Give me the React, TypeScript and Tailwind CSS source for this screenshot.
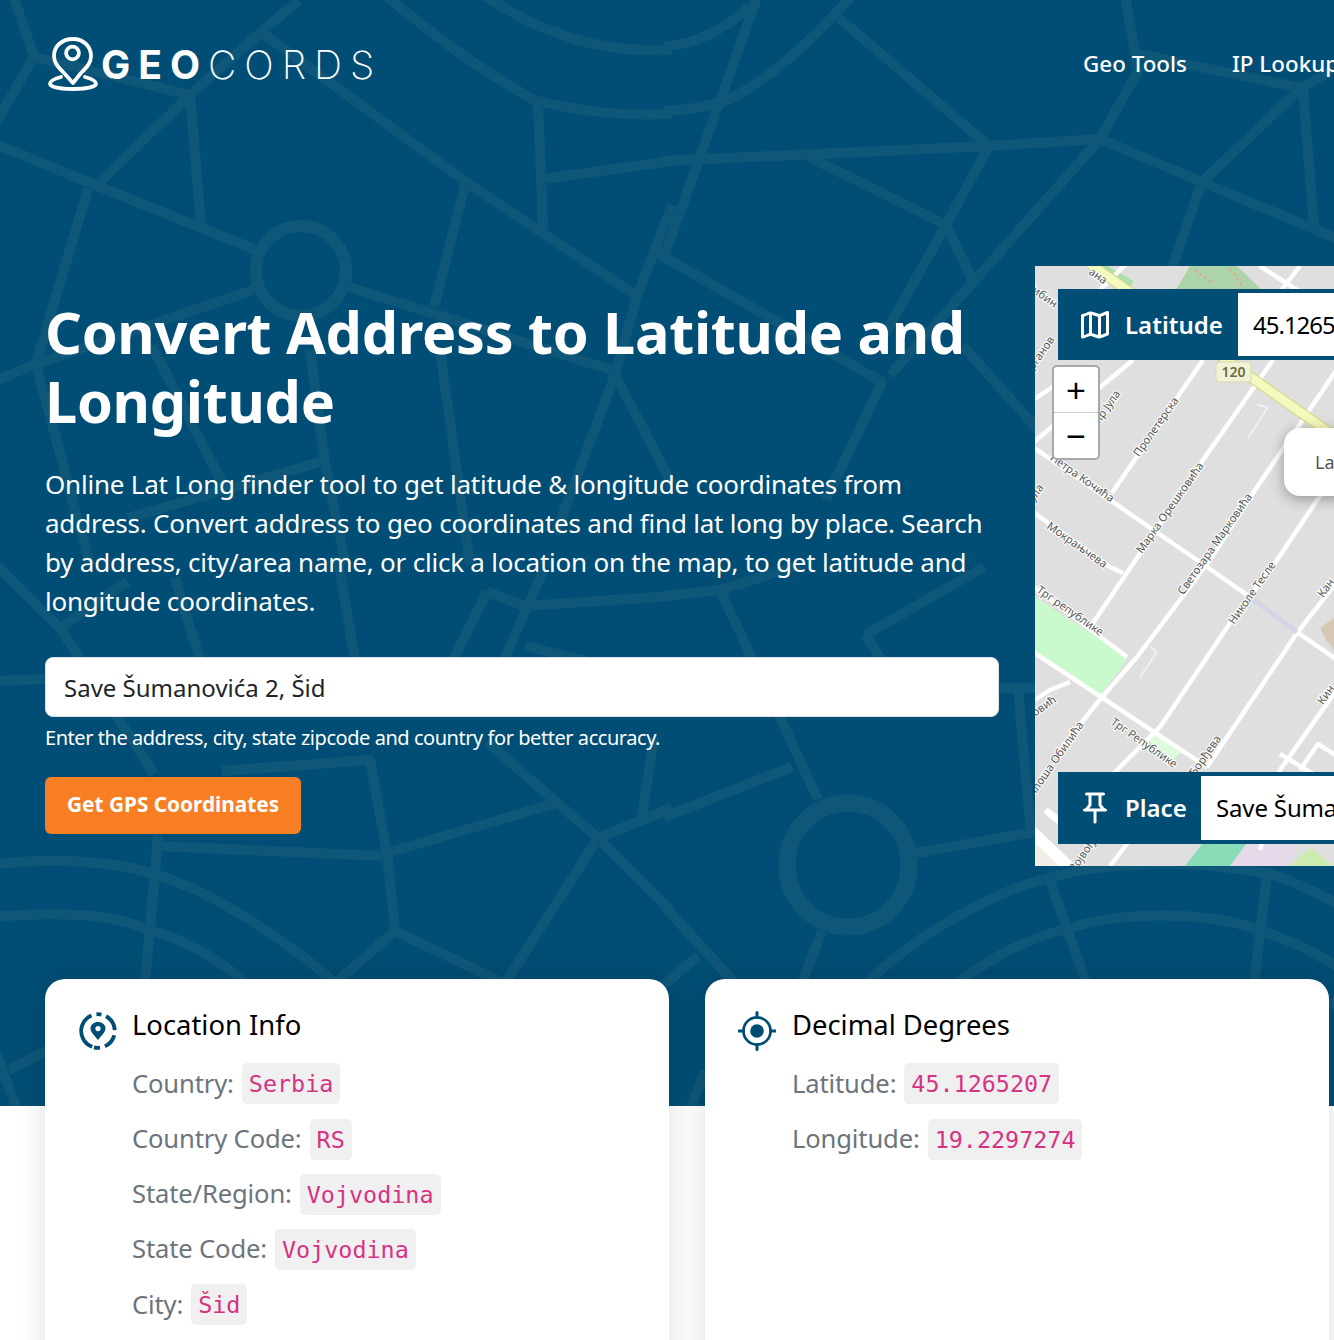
import { useState } from "react";

const roads = [
  "M13 -5 L34 57 L-5 124", "M34 57 L190 95 L261 32 L299 0", "M261 32 L466 182 L637 296 L672 205",
  "M190 95 L201 225", "M98 184 L190 95", "M-5 144 L98 186 L256 250", "M88 189 L36 364 L90 565",
  "M-5 381 L36 364 L256 289", "M346 286 L615 371", "M466 182 L434 307", "M538 100 L543 229",
  "M385 -5 C440 40 480 70 534 100 C580 112 625 116 672 114", "M483 -5 C520 18 540 28 555 32 C590 46 630 52 672 50",
  "M543 179 L672 161", "M637 296 L615 375 L555 535", "M615 375 L672 484", "M152 346 L231 500", "M310 350 L325 464 L346 565",
  "M440 350 L470 565", "M320 462 L128 518", "M-5 681 L77 678", "M-5 564 L60 628 L128 581", "M60 628 L154 774",
  "M175 578 L200 660", "M338 560 L355 660", "M487 592 L453 660", "M487 592 L525 606 L672 596", "M543 571 L504 660",
  "M525 646 L672 682", "M222 771 L370 760 L387 853 L395 931 L333 985", "M487 742 L598 838 L672 912",
  "M387 853 L556 803", "M158 846 L382 856", "M158 835 L145 985", "M395 931 L508 985", "M598 838 L504 985",
  "M598 838 L672 808", "M641 821 L654 738", "M-5 864 C50 858 110 860 154 874 C215 892 285 940 338 985",
  "M-5 917 C50 912 105 912 145 928 C190 942 220 960 248 985", "M-5 1049 L17 1110", "M9 1070 L48 1050",
  "M664 46 C690 46 725 30 749 7", "M664 111 C690 110 710 106 728 100 C760 85 810 45 852 -5", "M758 -5 L664 257",
  "M839 18 L989 146", "M662 161 L989 146 L1100 139 L1202 182 L1314 229 L1340 240", "M1100 139 L1138 71 L1125 -5",
  "M1138 54 L1301 88 L1340 66", "M1301 88 L1202 182", "M1303 88 L1314 229", "M1202 182 L1172 268",
  "M989 146 L946 225 L882 339", "M809 157 L946 225 L972 279", "M1100 139 L976 279 L890 375",
  "M652 250 L882 382 L826 500", "M963 346 L1040 432", "M664 596 L720 590 L818 799", "M720 590 L800 565",
  "M865 635 L984 567", "M865 635 L882 660", "M999 688 L1040 688", "M1018 688 L1031 835", "M664 817 L792 767",
  "M916 853 L1040 831", "M822 931 L801 985", "M664 906 L737 985", "M698 956 L664 985",
  "M865 985 C920 930 1000 890 1049 878 C1110 860 1200 860 1271 874 C1295 882 1315 892 1340 905",
  "M955 985 C1000 950 1040 935 1070 928 C1110 914 1200 908 1262 931 C1290 940 1310 950 1340 968",
  "M1049 878 L1087 985", "M1267 874 L1254 985", "M690 1110 L705 1070", "M1330 1000 L1340 1010",
];

const streets = [
  "M1012 460 L1133 360", "M1112 493 L1203 360", "M1093 623 L1203 460 L1273 360", "M1060 750 L1097 703 L1137 657 L1210 560 L1253 493 L1340 365",
  "M1160 727 L1230 623 L1277 560 L1340 466", "M1207 767 L1297 633 L1340 578", "M1280 770 L1340 685", "M1030 445 L1197 560 L1250 597",
  "M1297 632 L1340 662", "M1030 650 L1207 767", "M1030 510 L1110 567 L1123 573", "M1030 584 L1127 657", "M1260 266 L1300 292",
  "M1100 290 L1130 260", "M1280 292 L1300 266", "M1112 775 L1160 727", "M1260 850 L1280 770", "M1280 754 L1340 790", "M1300 770 L1318 744 L1340 758",
  "M1110 866 L1130 840", "M1035 700 L1050 690 L1070 682", "M1030 402 L1063 380",
];

const labels = [
  { x: 1159, y: 429, r: -55, t: "Пролетерска" }, { x: 1173, y: 510, r: -55, t: "Марка Орешковића" },
  { x: 1218, y: 546, r: -55, t: "Светозара Марковића" }, { x: 1255, y: 595, r: -55, t: "Николе Тесле" },
  { x: 1080, y: 481, r: 35, t: "Петра Кочића" }, { x: 1075, y: 548, r: 35, t: "Мокрањчева" },
  { x: 1068, y: 614, r: 35, t: "Трг републике" }, { x: 1142, y: 746, r: 35, t: "Трг Републике" },
  { x: 1056, y: 765, r: -55, t: "Милоша Обилића" }, { x: 1208, y: 758, r: -55, t: "Ђорђева" },
  { x: 1108, y: 412, r: -55, t: "Вир Јула" }, { x: 1038, y: 496, r: -55, t: "Јула" },
  { x: 1040, y: 298, r: 35, t: "Бибин" }, { x: 1042, y: 358, r: -55, t: "Врганов" },
  { x: 1096, y: 279, r: 35, t: "ана" }, { x: 1085, y: 858, r: -55, t: "Војвођ" },
  { x: 1046, y: 709, r: -35, t: "овић" }, { x: 1329, y: 590, r: -55, t: "Кан" }, { x: 1329, y: 697, r: -55, t: "Кин" },
];

function LogoIcon() {
  return (
    <svg width="50" height="54" viewBox="0 0 50 54" fill="none" stroke="#fff" strokeWidth="3.8" strokeLinecap="round" strokeLinejoin="round">
      <path d="M25 46 L16 36 C9 29 6 25 6 19 C6 9 14 2 25 2 C35 2 43 9 43 19 C43 25 40 29 33 36 Z" />
      <circle cx="24.5" cy="16" r="6.4" />
      <path d="M13 40 C6 42 2 44 2 46.5 C2 50 12 52 25 52 C37 52 48 50 48 46.5 C48 44 44 42 37 40" />
    </svg>
  );
}

function MapIcon() {
  return (
    <svg width="28" height="28" viewBox="0 0 28 28" fill="none" stroke="#fff" strokeWidth="3" strokeLinejoin="round">
      <path d="M1.5 4.5 C4 4.5 7 2 9.5 2 C12 2 16 4.5 18.5 4.5 C21 4.5 24 2 26.5 1.5 L26.5 23 C24 23.5 21 26 18.5 26 C16 26 12 23.5 9.5 23.5 C7 23.5 4 26 1.5 26 Z" />
      <path d="M9.5 2 V23.5 M18.5 4.5 V26" />
    </svg>
  );
}

function PinIcon() {
  return (
    <svg width="24" height="32" viewBox="0 0 24 32" fill="none" stroke="#fff" strokeWidth="3" strokeLinecap="round">
      <path d="M3.5 2 H20.5 M7 2 V13 M17 2 V13 M1.5 18 H22.5 M7 13 L3 18 M17 13 L21 18 M12 18 V30" />
    </svg>
  );
}

function LocationIcon() {
  return (
    <svg width="38" height="38" viewBox="0 0 38 38" fill="none">
      <circle cx="19" cy="19" r="16.8" stroke="#004e75" strokeWidth="3.8" strokeDasharray="40 5 5 5 17 5 15 5 6 2.6" transform="rotate(110 19 19)" />
      <path fill="#004e75" fillRule="evenodd" d="M19 28 C15 23 11.5 20 11.5 16.5 C11.5 12.5 15 10 19 10 C23 10 26.5 12.5 26.5 16.5 C26.5 20 23 23 19 28 Z M19 14 A2.6 2.6 0 1 0 19 19.2 A2.6 2.6 0 1 0 19 14 Z" />
    </svg>
  );
}

function TargetIcon() {
  return (
    <svg width="42" height="42" viewBox="0 0 42 42" fill="none" stroke="#004e75">
      <circle cx="21" cy="21" r="15" strokeWidth="3" />
      <circle cx="21" cy="21" r="7.5" fill="#004e75" stroke="none" />
      <path d="M21 0.5 V6 M21 36 V41.5 M0.5 21 H6 M36 21 H41.5" strokeWidth="3.4" strokeLinecap="round" />
    </svg>
  );
}

function StreetMap() {
  return (
    <svg width="299" height="600" viewBox="1035 266 299 600" className="block">
      <rect x="1035" y="266" width="299" height="600" fill="#dfdfdf" />
      <polygon points="1177,288 1190,266 1237,266 1260,288 1260,300 1177,300" fill="#acd4a8" />
      <path d="M1194 270 L1212 282 M1230 268 L1243 288" stroke="#e8a0a0" strokeWidth="2" strokeDasharray="3 3" fill="none" />
      <polygon points="1035,597 1035,653 1098,698 1128,658" fill="#c8facc" />
      <polygon points="1155,730 1182,752 1173,760 1147,740" fill="#dcfbdc" stroke="#c8f0c8" />
      <polygon points="1185,866 1203,843 1247,843 1230,866" fill="#88dcb8" />
      <polygon points="1230,866 1247,843 1297,843 1287,866" fill="#e6d9ea" />
      <polygon points="1290,866 1310,848 1334,866" fill="#cdebb0" />
      <polygon points="1035,835 1070,866 1035,866" fill="#f1efe8" />
      <polygon points="1320,628 1334,618 1334,650 1326,640" fill="#d6c8b4" />
      <path d="M1100 270 L1130 287" stroke="#a9e0a5" strokeWidth="14" />
      {streets.map((d) => (
        <path key={d} d={d} fill="none" stroke="#fff" strokeWidth="4.5" strokeLinejoin="round" />
      ))}
      <path d="M1250 597 L1297 632" stroke="#d4d4e6" strokeWidth="5" />
      <path d="M1030 830 L1068 866" stroke="#fff" strokeWidth="12" fill="none" />
      <path d="M1048 812 L1058 820" stroke="#fff" strokeWidth="7" strokeLinecap="round" />
      <path d="M1140 677 L1157 652 L1150 647 M1248 438 L1268 407 L1257 405" stroke="#f4f4f4" strokeWidth="1.5" fill="none" />
      <path d="M1090 264 L1340 440" stroke="#d6d98f" strokeWidth="11" />
      <path d="M1090 264 L1340 440" stroke="#f6f9bd" strokeWidth="8.5" />
      <rect x="1216" y="362" width="35" height="20" rx="3" fill="#f2f2d8" stroke="#d8d8a8" />
      <text x="1233.5" y="377" textAnchor="middle" fontSize="14" fontWeight="600" fill="#6b6b3c">120</text>
      {labels.map((l) => (
        <text key={l.t} x={l.x} y={l.y} textAnchor="middle" fontSize="11.2" fill="#555" stroke="#fff" strokeWidth="2" paintOrder="stroke" transform={`rotate(${l.r} ${l.x} ${l.y})`}>
          {l.t}
        </text>
      ))}
    </svg>
  );
}

function InfoRow({ label, value }: { label: string; value: string }) {
  return (
    <div className="flex h-[41px] items-center gap-[8px] mb-[14.25px] text-[25.6px] tracking-[-0.15px] text-[#6c757d]">
      <span>{label}</span>
      <code className="rounded-[5px] bg-[#f0f0f0] px-[7px] h-[41px] leading-[42px] tracking-normal font-['DejaVu_Sans_Mono',monospace] text-[23.4px] text-[#d63384]">
        {value}
      </code>
    </div>
  );
}

export default function App() {
  const [address, setAddress] = useState("Save Šumanovića 2, Šid");

  return (
    <div className="h-[1340px] w-full overflow-hidden bg-white font-['Noto_Sans',sans-serif]">
      {/* hero */}
      <section className="relative h-[1106px] w-[1660px] bg-[#004e75]">
        <svg className="absolute inset-0" width="1334" height="1106" viewBox="0 0 1334 1106" fill="none" stroke="#0f5779" strokeWidth="10">
          {roads.map((d) => (
            <path key={d} d={d} strokeLinejoin="round" />
          ))}
          <ellipse cx="301" cy="271" rx="45" ry="45" strokeWidth="12" />
          <ellipse cx="848" cy="865" rx="61" ry="62" strokeWidth="17" />
        </svg>

        <header className="relative flex h-[266px] items-start justify-between pl-[48px] pt-[37px]">
          <div className="flex h-[54px] items-center">
            <LogoIcon />
            <span className="ml-[3px] font-['Inter',sans-serif] text-[39px] leading-none tracking-[8px] text-white">
              <span className="font-bold">GEO</span>
              <span className="font-extralight">CORDS</span>
            </span>
          </div>
          <nav className="absolute left-[1083px] top-[37px] flex h-[54px] items-center gap-[45px] whitespace-nowrap text-[22.4px] font-medium text-white">
            <a>Geo Tools</a>
            <a>IP Lookup</a>
          </nav>
        </header>

        <div className="relative flex gap-[36px] pl-[45px]">
          <div className="w-[954px] pt-[31px]">
            <h1 className="text-[57.6px] font-bold leading-[1.2] tracking-[-0.3px] text-white">Convert Address to Latitude and Longitude</h1>
            <p className="mt-[30px] text-[26px] leading-[39px] tracking-[-0.22px] text-white">
              Online Lat Long finder tool to get latitude &amp; longitude coordinates from address. Convert address to geo coordinates and find lat long by place. Search by address, city/area name, or click a location on the map, to get latitude and longitude coordinates.
            </p>
            <input
              value={address}
              onChange={(e) => setAddress(e.target.value)}
              className="mt-[36px] block h-[60px] w-full rounded-lg border border-[#dee2e6] bg-white px-[18px] text-[24px] text-[#212529] outline-none"
            />
            <p className="mt-[6px] text-[20px] leading-[29px] tracking-[-0.45px] text-white">Enter the address, city, state zipcode and country for better accuracy.</p>
            <button className="mt-[25px] h-[57px] rounded-md bg-[#f77e23] px-[22px] pb-[2px] text-[20.8px] font-bold text-white">Get GPS Coordinates</button>
          </div>

          {/* map */}
          <div className="relative h-[600px] w-[624px] overflow-hidden bg-[#dfdfdf]">
            <StreetMap />
            <div className="absolute left-[23px] right-[23px] top-[23px] flex h-[71px] items-center bg-[#004e75] pl-[23px]">
              <MapIcon />
              <span className="ml-[16px] w-[113px] shrink-0 text-[24px] font-semibold text-white">Latitude</span>
              <div className="flex h-[63px] flex-1 items-center bg-white pl-[15px] text-[24px] tracking-[-1px] text-black">45.1265207</div>
            </div>
            <div className="absolute left-[17px] top-[99px] w-[48px] overflow-hidden rounded-[5px] border-2 border-[#a8a8a8] bg-white font-['Liberation_Sans',sans-serif] text-black">
              <div className="flex h-[46px] items-center justify-center border-b border-[#ccc] text-[34px] leading-none">+</div>
              <div className="flex h-[45px] items-center justify-center text-[34px] leading-none">−</div>
            </div>
            <div className="absolute left-[249px] top-[162px] flex h-[68px] w-[200px] items-center rounded-2xl bg-white pl-[31px] text-[18px] text-[#555] shadow-[0_3px_14px_rgba(0,0,0,0.35)]">Latitude</div>
            <div className="absolute bottom-[22px] left-[23px] right-[23px] flex h-[72px] items-center bg-[#004e75] pl-[25px]">
              <PinIcon />
              <span className="ml-[18px] w-[76px] shrink-0 text-[24px] font-semibold text-white">Place</span>
              <div className="flex h-[64px] flex-1 items-center bg-white pl-[15px] text-[24px] tracking-[-0.15px] text-black">Save Šumanovića 2, Šid</div>
            </div>
          </div>
        </div>
      </section>

      {/* result cards */}
      <div className="relative -mt-[127px] flex w-[1329px] gap-[36px] pl-[45px]">
        <div className="flex h-[600px] w-[624px] shrink-0 gap-[16px] rounded-t-[20px] bg-white pl-[34px] pt-[27px] shadow-[0_0_30px_rgba(0,0,0,0.13)]">
          <div className="mt-[6px] flex h-[38px] w-[38px] justify-center"><LocationIcon /></div>
          <div className="-ml-px">
            <h2 className="mb-[19.4px] h-[38px] text-[27.4px] leading-[38px] text-black">Location Info</h2>
            <InfoRow label="Country:" value="Serbia" />
            <InfoRow label="Country Code:" value="RS" />
            <InfoRow label="State/Region:" value="Vojvodina" />
            <InfoRow label="State Code:" value="Vojvodina" />
            <InfoRow label="City:" value="Šid" />
          </div>
        </div>
        <div className="flex h-[600px] w-[624px] shrink-0 gap-[16px] rounded-t-[20px] bg-white pl-[34px] pt-[27px] shadow-[0_0_30px_rgba(0,0,0,0.13)]">
          <div className="-ml-px mt-[4px] flex h-[38px] w-[38px] justify-center"><TargetIcon /></div>
          <div>
            <h2 className="mb-[19.4px] h-[38px] text-[27.4px] leading-[38px] text-black">Decimal Degrees</h2>
            <InfoRow label="Latitude:" value="45.1265207" />
            <InfoRow label="Longitude:" value="19.2297274" />
          </div>
        </div>
      </div>
    </div>
  );
}
